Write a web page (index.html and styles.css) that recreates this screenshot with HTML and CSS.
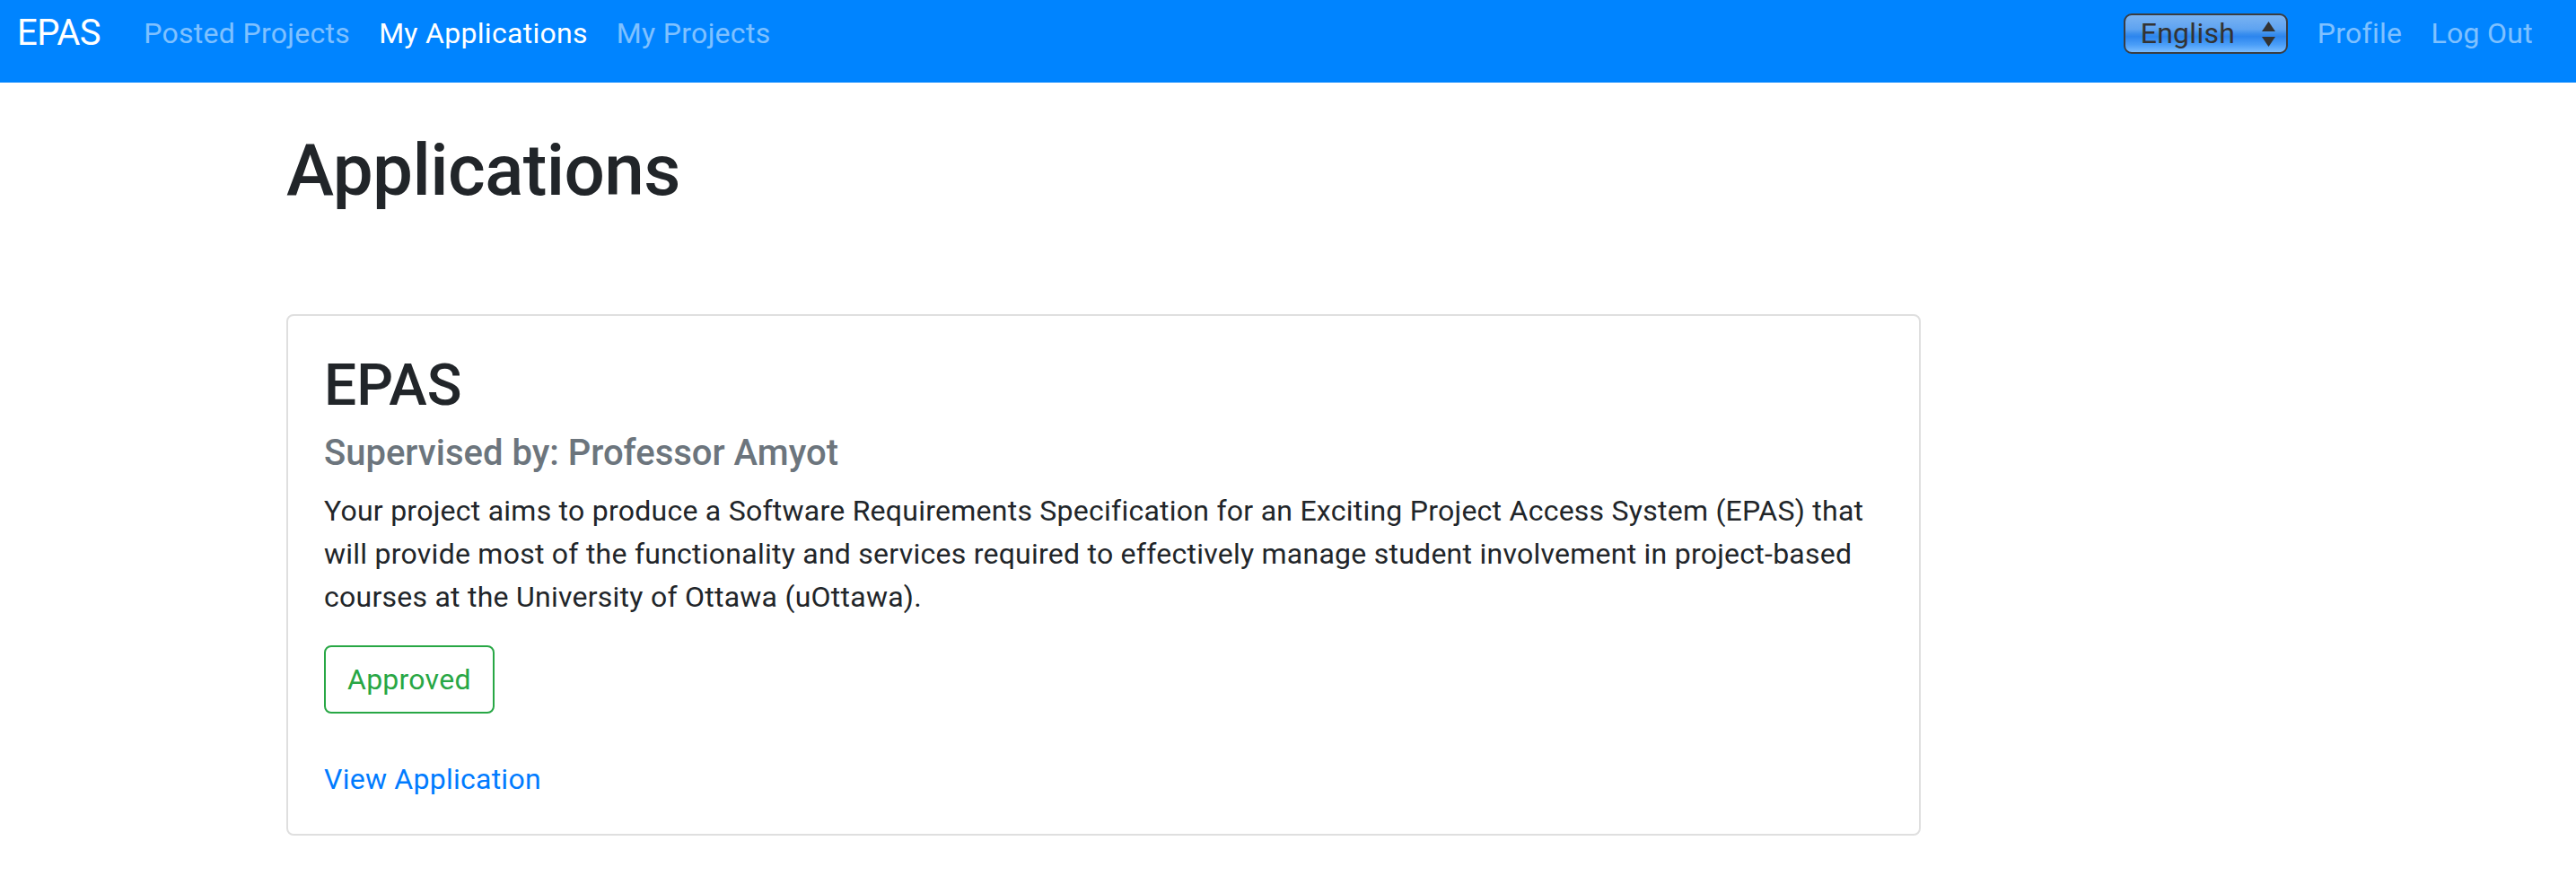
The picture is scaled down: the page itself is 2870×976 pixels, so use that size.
FILE: index.html
```html
<!DOCTYPE html>
<html lang="en">
<head>
<meta charset="utf-8">
<title>EPAS - My Applications</title>
<link rel="stylesheet" href="styles.css">
</head>
<body>
<nav class="navbar">
  <a class="brand" href="#">EPAS</a>
  <ul class="nav-list">
    <li><a class="nav-link" href="#">Posted Projects</a></li>
    <li><a class="nav-link active" href="#">My Applications</a></li>
    <li><a class="nav-link" href="#">My Projects</a></li>
  </ul>
  <div class="nav-right">
    <div class="lang-select">
      <span class="lang-value">English</span>
      <svg class="lang-arrows" width="15" height="29" viewBox="0 0 15 29"><polygon points="7.5,0 15,11 0,11" fill="#333"/><polygon points="0,17 15,17 7.5,28" fill="#333"/></svg>
    </div>
    <a class="nav-link" href="#">Profile</a>
    <a class="nav-link" href="#">Log Out</a>
  </div>
</nav>
<main class="container">
  <h1 class="page-title">Applications</h1>
  <div class="card">
    <div class="card-body">
      <h2 class="card-title">EPAS</h2>
      <h5 class="card-subtitle">Supervised by: Professor Amyot</h5>
      <p class="card-text">Your project aims to produce a Software Requirements Specification for an Exciting Project Access System (EPAS) that will provide most of the functionality and services required to effectively manage student involvement in project-based courses at the University of Ottawa (uOttawa).</p>
      <div class="status status-approved">Approved</div>
      <a class="card-link" href="#">View Application</a>
    </div>
  </div>
</main>
</body>
</html>
```
FILE: styles.css
```css
* { box-sizing: border-box; }
html, body { margin: 0; padding: 0; }
body {
  font-family: Roboto, "Liberation Sans", Arial, sans-serif;
  font-size: 32px;
  line-height: 1.5;
  letter-spacing: 0.25px;
  color: #212529;
  background: #fff;
}
a { text-decoration: none; }

.navbar {
  display: flex;
  align-items: center;
  height: 92px;
  padding: 0 32px 18px 19px;
  background: #0084ff;
}
.brand {
  font-size: 40px;
  line-height: 60px;
  color: #fff;
  margin-right: 32px;
  letter-spacing: -0.5px;
}
.nav-list {
  display: flex;
  list-style: none;
  margin: 0;
  padding: 0;
}
.nav-link {
  display: block;
  padding: 0 16px;
  line-height: 48px;
  letter-spacing: 0.3px;
  color: rgba(255, 255, 255, 0.5);
}
.nav-link.active { color: #fff; }
.nav-right {
  display: flex;
  align-items: center;
  margin-left: auto;
}
.lang-select {
  position: relative;
  display: flex;
  align-items: center;
  width: 183px;
  height: 45px;
  margin-right: 17px;
  padding-left: 17px;
  border: 2px solid #3a3d42;
  border-radius: 9px;
  background: linear-gradient(to bottom, #7ab3f2 0%, #5ea3f1 38%, #3b8fee 50%, #2c85ee 58%, #4a9ef8 80%, #79bcff 100%);
  color: #333;
  font-size: 32px;
  line-height: 41px;
  letter-spacing: 0.3px;
}
.lang-arrows {
  position: absolute;
  right: 12px;
  top: 7px;
}

.container {
  padding: 0 0 0 319px;
}
.page-title {
  margin: 50px 0 0;
  font-size: 80px;
  font-weight: 500;
  line-height: 1.2;
  letter-spacing: -0.6px;
}
.card {
  width: 1821px;
  margin-top: 112px;
  border: 2px solid #dfdfdf;
  border-radius: 8px;
}
.card-body {
  padding: 40px 40px 37px;
}
.card-title {
  margin: 0 0 24px;
  font-size: 64px;
  font-weight: 500;
  line-height: 1.2;
  letter-spacing: 0;
}
.card-subtitle {
  margin: -12px 0 16px;
  font-size: 40px;
  font-weight: 500;
  line-height: 1.2;
  letter-spacing: 0;
  color: #6c757d;
}
.card-text {
  margin: 0 0 30px;
}
.status {
  display: inline-block;
  padding: 12px 24px;
  border-radius: 8px;
  line-height: 48px;
}
.status-approved {
  color: #28a745;
  border: 2px solid #28a745;
}
.card-link {
  display: block;
  margin-top: 49px;
  color: #007bff;
}
```
